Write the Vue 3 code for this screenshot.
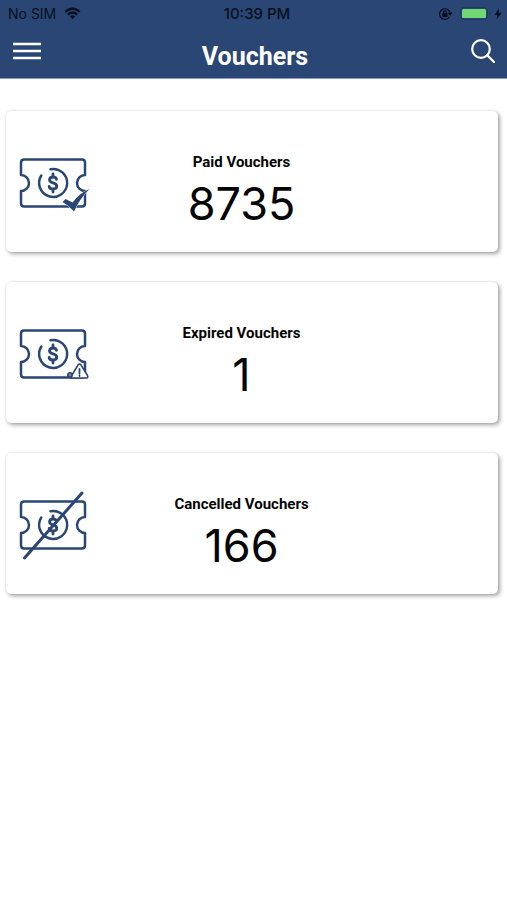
<script setup>
const vouchers = [
  { kind: 'paid', label: 'Paid Vouchers', count: 8735 },
  { kind: 'expired', label: 'Expired Vouchers', count: 1 },
  { kind: 'cancelled', label: 'Cancelled Vouchers', count: 166 },
]
</script>

<template>
  <div class="screen">
    <header class="header">
      <div class="status">
        <div class="status-left">
          <span class="carrier">No SIM</span>
          <svg class="wifi" viewBox="0 0 18 14" aria-hidden="true">
            <path d="M1.2 5.2Q9 -2 16.8 5.2" />
            <path d="M4 8.2Q9 3.7 14 8.2" />
            <path class="solid" d="M6.2 10.2Q9 7.8 11.8 10.2L9 13Z" />
          </svg>
        </div>
        <span class="time">10:39 PM</span>
        <div class="status-right">
          <svg class="lock" viewBox="0 0 14 14" aria-hidden="true">
            <path d="M11.2 10.2A5.3 5.3 0 1 1 12.2 6.5M10.4 6.2l1.8 1.6 1.4-2" />
            <path d="M5.5 6.5V5.2a1.4 1.4 0 0 1 2.8 0v1.3" />
            <rect class="solid" x="4.3" y="6.1" width="5.2" height="3.9" rx="0.6" />
          </svg>
          <svg class="battery" viewBox="0 0 32 14" aria-hidden="true">
            <rect class="shell" x="0.5" y="0.5" width="27" height="12" rx="3" />
            <rect class="charge" x="2" y="2" width="24" height="9" rx="1.5" />
            <path class="shell" d="M30 5v3" />
          </svg>
          <svg class="bolt" viewBox="0 0 8 12" aria-hidden="true">
            <path d="M5 0.5L0.5 7H3.5L2.5 11.5L7.5 4.8H4.5Z" />
          </svg>
        </div>
      </div>
      <div class="bar">
        <button class="icon-button" type="button" aria-label="Menu">
          <svg class="menu" viewBox="0 0 28 18" aria-hidden="true">
            <path d="M0 2h28M0 9h28M0 16h28" />
          </svg>
        </button>
        <h1>Vouchers</h1>
        <button class="icon-button" type="button" aria-label="Search">
          <svg class="search" viewBox="0 0 24 24" aria-hidden="true">
            <circle cx="10" cy="10" r="8.8" />
            <path d="M16.3 16.3L23 23" />
          </svg>
        </button>
      </div>
    </header>

    <main class="cards">
      <section v-for="voucher in vouchers" :key="voucher.kind" class="card">
        <svg class="ticket" viewBox="0 0 80 80" aria-hidden="true">
          <path d="M9 17.500H67Q70 17.500 70 20.500V33A8 8 0 0 0 70 49V61.500Q70 64.500 67 64.500H9Q6 64.500 6 61.500V49A8 8 0 0 0 6 33V20.500Q6 17.500 9 17.500Z" />
          <path d="M35.500 27.200A14 14 0 1 1 26.300 33.500" />
          <path class="dollar" d="M41.500 37.300Q41.200 35 38 35T34.500 37.800Q34.500 40 38 40.800T41.800 44Q41.800 47 38 47T34.200 44.500M38 32V35M38 47V50" />
          <path v-if="voucher.kind === 'paid'" class="check" d="M47.500 60L50.500 57L57.500 60.500Q64 51.500 74.500 47Q64.500 57 59 69.500Q54 63.500 47.500 60Z" />
          <g v-else-if="voucher.kind === 'expired'" class="warning">
            <path d="M63 52Q64.500 50 66 52L72.500 62.500Q73.500 65 71.500 65H55.500L57 62Z" />
            <path class="mark" d="M64.500 56V60.500M64.500 62.500V63" />
            <circle cx="55" cy="62" r="2.200" />
          </g>
          <path v-else class="slash" d="M9.500 74L67 9" />
        </svg>
        <div class="figures">
          <h2>{{ voucher.label }}</h2>
          <p>{{ voucher.count }}</p>
        </div>
      </section>
    </main>
  </div>
</template>

<style>
body {
  margin: 0;
  background: #fff;
}
</style>

<style scoped>
.screen {
  min-height: 100vh;
  background: #fff;
  color: #050505;
}

svg {
  display: block;
  fill: none;
  stroke-linecap: round;
  stroke-linejoin: round;
}

.header {
  background: #2a4674;
  border-bottom: 1px solid #8d9db7;
}

.status {
  display: grid;
  grid-template-columns: 1fr auto 1fr;
  align-items: center;
  height: 27px;
  padding: 0 5px 0 8px;
  color: #07101f;
  font-family: Inter, sans-serif;
  font-size: 14px;
}

.status-left,
.status-right {
  display: flex;
  align-items: center;
  gap: 8px;
}

.status-right {
  justify-content: flex-end;
}

.time {
  padding-left: 4px;
  font-size: 15px;
  font-weight: 500;
}

.wifi {
  width: 17px;
  height: 13px;
  stroke: #07101f;
  stroke-width: 2.6;
  stroke-linecap: butt;
}

.solid,
.bolt {
  fill: #07101f;
  stroke: none;
}

.lock {
  width: 14px;
  height: 14px;
  stroke: #07101f;
  stroke-width: 1.2;
}

.battery {
  width: 32px;
  height: 14px;
}

.shell {
  stroke: #203859;
  stroke-width: 1;
}

.charge {
  fill: #70d873;
}

.bolt {
  width: 8px;
  height: 12px;
  margin-left: -6px;
}

.bar {
  display: grid;
  grid-template-columns: 28px 1fr 28px;
  align-items: center;
  height: 51px;
  padding: 0 10px 0 13px;
}

.icon-button {
  display: flex;
  align-items: center;
  justify-content: center;
  height: 44px;
  margin-bottom: 4px;
  padding: 0;
  border: 0;
  background: none;
  cursor: pointer;
}

.menu {
  width: 28px;
  height: 18px;
  stroke: #fff;
  stroke-width: 2.5;
  stroke-linecap: butt;
}

.search {
  width: 24px;
  height: 24px;
  stroke: #fff;
  stroke-width: 2.2;
}

h1 {
  margin: 0;
  padding-top: 8px;
  color: #fff;
  font: 700 25px/32px Roboto, sans-serif;
  text-align: center;
}

.cards {
  display: grid;
  gap: 30px;
  padding: 32px 9px 32px 6px;
}

.card {
  display: grid;
  grid-template-columns: 80px 1fr;
  column-gap: 16px;
  align-items: center;
  height: 141px;
  padding: 0 126px 0 9px;
  box-sizing: border-box;
  border-radius: 5px;
  background: #fff;
  box-shadow: 2px 2px 4px rgba(0, 0, 0, 0.35), 0 0 2px rgba(0, 0, 0, 0.15);
}

.ticket {
  width: 80px;
  height: 80px;
  stroke: #2a4674;
  stroke-width: 2.5;
}

.dollar {
  stroke-width: 2.8;
}

.check {
  fill: #2a4674;
  stroke: #fff;
  stroke-width: 1;
  paint-order: stroke;
}

.warning {
  fill: #fff;
  stroke-width: 1.5;
}

.warning circle {
  fill: #7184a3;
}

.mark {
  stroke-width: 1.8;
}

.slash {
  stroke-width: 3;
}

.figures {
  padding-top: 24px;
  text-align: center;
}

h2 {
  margin: 0;
  font: 700 15px/20px Roboto, sans-serif;
}

p {
  margin: 0;
  font: 400 45px/64px Inter, sans-serif;
}
</style>
